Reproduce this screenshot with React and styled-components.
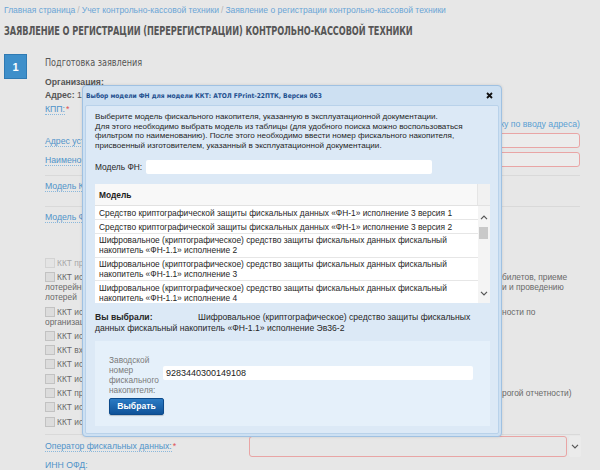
import React from "react";
import styled, { createGlobalStyle } from "styled-components";

const GlobalStyle = createGlobalStyle`
  html, body { margin: 0; padding: 0; }
  body {
    background: #e7e7e7;
    font-family: "Liberation Sans", Arial, sans-serif;
    width: 600px;
    height: 470px;
    overflow: hidden;
  }
`;

const Page = styled.div`
  position: relative;
  width: 600px;
  height: 470px;
  padding-left: 4px;
  box-sizing: border-box;
  background: #e7e7e7;
`;

const Breadcrumbs = styled.nav`
  padding-top: 4px;
  height: 12px;
  line-height: 12px;
  font-size: 8.5px;
  color: #6aa5d6;
  white-space: nowrap;
`;

const Sep = styled.span`
  color: #b5b5b5;
  margin: 0 2px;
`;

const Title = styled.h1`
  margin: 6px 0 0;
  height: 18px;
  line-height: 18px;
  font-family: "DejaVu Sans Condensed", "Liberation Sans Narrow", sans-serif;
  font-weight: bold;
  font-size: 12px;
  color: #565656;
  white-space: nowrap;
  letter-spacing: -0.1px;
  transform: scaleX(0.76);
  transform-origin: left center;
`;

const Step = styled.section`
  display: flex;
  margin-top: 14px;
  gap: 18px;
`;

const Badge = styled.div`
  flex: none;
  width: 23px;
  height: 25px;
  background: #3e8fca;
  border: 1px solid #2f7ab3;
  box-sizing: border-box;
  color: #fff;
  font-weight: bold;
  font-size: 11px;
  display: flex;
  align-items: center;
  justify-content: center;
`;

const StepBody = styled.div`
  width: 535px;
  display: flex;
  flex-direction: column;
`;

const StepTitle = styled.h2`
  margin: 1px 0 0;
  height: 16px;
  line-height: 16px;
  font-family: "DejaVu Sans Condensed", "Liberation Sans Narrow", sans-serif;
  font-weight: normal;
  font-size: 10px;
  color: #555;
  transform: scaleX(0.9);
  transform-origin: left center;
`;

const InfoRow = styled.div`
  height: 13.5px;
  line-height: 13.5px;
  font-size: 8.7px;
  color: #555;
  font-weight: ${(p) => (p.$bold ? "bold" : "normal")};
  white-space: nowrap;
  margin-top: ${(p) => p.$mt || 0}px;
`;

const Link = styled.span`
  color: #4f93c9;
  border-bottom: 1px dotted #8ab8dc;
  line-height: 10px;
`;

const Req = styled.span`
  color: #e05252;
  margin-left: 1px;
`;

const Hint = styled.div`
  margin-top: 2px;
  height: 12px;
  line-height: 12px;
  font-size: 8.7px;
  color: #5a9fd3;
  text-align: right;
  white-space: nowrap;
  overflow: hidden;
`;

const FieldRow = styled.div`
  display: grid;
  grid-template-columns: 202px 1fr;
  align-items: center;
  height: 15px;
  margin-top: ${(p) => p.$mt || 0}px;
  font-size: 8.7px;
  white-space: nowrap;
`;

const RedInput = styled.div`
  height: 15px;
  border: 1px solid #e9a5a5;
  border-radius: 3px;
  box-sizing: border-box;
  background: #ececec;
`;

const Divider = styled.div`
  height: 1px;
  background: #d9d9d9;
  margin-top: ${(p) => p.$mt || 0}px;
`;

const PlainRow = styled.div`
  padding-top: ${(p) => p.$pt || 0}px;
  height: 12px;
  line-height: 12px;
  font-size: 8.7px;
  white-space: nowrap;
`;

const Checks = styled.div`
  margin-top: ${(p) => p.$mt || 0}px;
  display: flex;
  flex-direction: column;
  gap: 4.3px;
`;

const CheckItem = styled.div`
  display: grid;
  grid-template-columns: 457px 78px;
  font-size: 8.4px;
  line-height: 10px;
  color: ${(p) => (p.$disabled ? "#a9a9a9" : "#6a6a6a")};
`;

const CheckStart = styled.span`
  white-space: nowrap;
  overflow: hidden;
  display: flex;
  align-items: center;
`;

const CheckTail = styled.span`
  white-space: nowrap;
  overflow: hidden;
`;

const Box = styled.span`
  flex: none;
  width: 8px;
  height: 8px;
  margin-right: 2px;
  border: 1px solid ${(p) => (p.$disabled ? "#d3d3d3" : "#c2c2c2")};
  background: ${(p) => (p.$disabled ? "#e4e4e4" : "#dcdcdc")};
`;

const SelectRow = styled.div`
  display: grid;
  grid-template-columns: 202px 318px 12px;
  column-gap: 2px;
  align-items: center;
  height: 21px;
  margin-top: 1px;
  font-size: 8.7px;
  white-space: nowrap;
`;

const RedSelect = styled.div`
  height: 21px;
  border: 1px solid #e9a5a5;
  border-radius: 3px;
  box-sizing: border-box;
`;

const ArrowBtn = styled.div`
  height: 21px;
  display: flex;
  align-items: center;
  justify-content: center;
  background: #ebebeb;
  border-radius: 2px;
  color: #666;
`;

/* ---------- modal ---------- */

const Modal = styled.div`
  position: absolute;
  left: 82px;
  top: 85px;
  width: 420px;
  height: 352px;
  box-sizing: border-box;
  border: 1px solid #9fc1e2;
  border-radius: 4px;
  background: #cde0f2;
  box-shadow: 0 0 3px rgba(0, 0, 0, 0.12);
  padding: 0 2px 2px;
  display: flex;
  flex-direction: column;
`;

const TitleBar = styled.div`
  height: 19px;
  flex: none;
  display: flex;
  align-items: center;
  justify-content: space-between;
  padding: 0 6px 0 1px;
`;

const ModalTitle = styled.div`
  font-family: "DejaVu Sans Condensed", "DejaVu Sans", Verdana, sans-serif;
  font-weight: bold;
  font-size: 6.6px;
  color: #1d4f8f;
  white-space: nowrap;
`;

const ModalBody = styled.div`
  flex: 1;
  background: #dce9f6;
  border: 1px solid #b9d2ea;
  border-radius: 2px;
  padding: 6px 8px 0 9px;
  display: flex;
  flex-direction: column;
  font-size: 8.4px;
  color: #262626;
`;

const Intro = styled.p`
  margin: 0;
  font-size: 8.1px;
  line-height: 9.6px;
  white-space: nowrap;
  color: #1f1f1f;
`;

const FilterRow = styled.div`
  display: flex;
  align-items: center;
  margin-top: 10px;
  height: 14px;
  font-size: 8.4px;
`;

const FilterLabel = styled.span`
  width: 51px;
  flex: none;
`;

const FilterInput = styled.div`
  width: 286px;
  height: 14px;
  background: #fff;
  border-radius: 2px;
`;

const Table = styled.div`
  margin-top: 10px;
  width: 395px;
  background: #fff;
  display: flex;
  flex-direction: column;
`;

const HeadRow = styled.div`
  display: grid;
  grid-template-columns: 1fr 12px;
  height: 22px;
  background: #f8f8f8;
  border-bottom: 1px solid #e2e2e2;
  box-sizing: border-box;
`;

const HeadCell = styled.div`
  display: flex;
  align-items: center;
  padding-left: 4px;
  font-weight: bold;
  font-size: 8.4px;
  color: #1d1d1d;
  border-right: ${(p) => (p.$last ? "none" : "1px solid #e5e5e5")};
  background: ${(p) => (p.$last ? "#f1f1f1" : "transparent")};
`;

const BodyArea = styled.div`
  display: grid;
  grid-template-columns: 1fr 12px;
  height: 97px;
  overflow: hidden;
`;

const Rows = styled.div`
  display: flex;
  flex-direction: column;
`;

const Row = styled.div`
  padding: 1.5px 4px 1.25px;
  line-height: 10px;
  border-bottom: 1px solid #e6e6e6;
  white-space: nowrap;
`;

const Scrollbar = styled.div`
  background: #f4f4f4;
  position: relative;
  display: flex;
  flex-direction: column;
  align-items: center;
  justify-content: space-between;
  padding: 9px 0 9px;
`;

const Thumb = styled.div`
  position: absolute;
  top: 21px;
  left: 1px;
  width: 9px;
  height: 12px;
  background: #c9c9c9;
`;

const Chosen = styled.div`
  margin-top: 8.5px;
  line-height: 11px;
  font-size: 8.6px;
`;

const ChosenLabel = styled.span`
  display: inline-block;
  width: 103px;
  font-weight: bold;
`;

const SerialPanel = styled.div`
  margin-top: 7px;
  width: 395px;
  height: 85px;
  box-sizing: border-box;
  background: #e5f0fa;
  padding: 14px 0 0 14px;
`;

const SerialRow = styled.div`
  display: grid;
  grid-template-columns: 54px 310px;
  align-items: start;
`;

const SerialLabel = styled.div`
  color: #7b7b7b;
  line-height: 10.2px;
  font-size: 8.3px;
`;

const SerialInput = styled.div`
  margin-top: 11px;
  height: 14px;
  background: #fff;
  border-radius: 2px;
  padding-left: 3px;
  line-height: 14px;
  font-size: 9px;
  color: #222;
`;

const Button = styled.button`
  margin-top: 2px;
  width: 55px;
  height: 17px;
  padding: 0;
  border: 1px solid #0c4a8b;
  border-radius: 2px;
  background: linear-gradient(#2b7bc4, #0f5299);
  color: #fff;
  font-family: "Liberation Sans", Arial, sans-serif;
  font-weight: bold;
  font-size: 8.6px;
  box-shadow: 0 1px 1px rgba(0, 0, 0, 0.2);
`;

const Chevron = ({ up }) => (
  <svg width="8" height="5" viewBox="0 0 8 5">
    <path
      d={up ? "M1 4.2 L4 1.2 L7 4.2" : "M1 0.8 L4 3.8 L7 0.8"}
      fill="none"
      stroke="#555"
      strokeWidth="1.2"
    />
  </svg>
);

const CloseIcon = () => (
  <svg width="7" height="7" viewBox="0 0 7 7">
    <path d="M1 1 L6 6 M6 1 L1 6" stroke="#111" strokeWidth="1.8" />
  </svg>
);

const checks = [
  { disabled: true, lines: [["ККТ предназначена для работы в автономном режиме", ""]] },
  {
    lines: [
      ["ККТ используется при распространении лотерейных", "билетов, приеме"],
      ["лотерейных ставок и выплате выигрышей при организаци", "и и проведению"],
      ["лотерей", ""],
    ],
  },
  {
    lines: [
      ["ККТ используется при осуществлении деятель", "ности по"],
      ["организации и проведению азартных игр", ""],
    ],
  },
  { lines: [["ККТ используется при приеме ставок", ""]] },
  { lines: [["ККТ входит в состав автоматического устройства для расчетов", ""]] },
  { lines: [["ККТ используется для расчетов в сети Интернет", ""]] },
  { lines: [["ККТ используется при продаже подакцизных товаров", ""]] },
  { lines: [["ККТ предназначена для оказания услуг (бланк ст", "рогой отчетности)"]] },
  { lines: [["ККТ используется только для оказания услуг", ""]] },
  { lines: [["ККТ используется при осуществлении перевозок", ""]] },
];

const models = [
  ["Средство криптографической защиты фискальных данных «ФН-1» исполнение 3 версия 1"],
  ["Средство криптографической защиты фискальных данных «ФН-1» исполнение 3 версия 2"],
  [
    "Шифровальное (криптографическое) средство защиты фискальных данных фискальный",
    "накопитель «ФН-1.1» исполнение 2",
  ],
  [
    "Шифровальное (криптографическое) средство защиты фискальных данных фискальный",
    "накопитель «ФН-1.1» исполнение 3",
  ],
  [
    "Шифровальное (криптографическое) средство защиты фискальных данных фискальный",
    "накопитель «ФН-1.1» исполнение 4",
  ],
];

export default function App() {
  return (
    <Page>
      <GlobalStyle />
      <Breadcrumbs>
        Главная страница<Sep>/</Sep>Учет контрольно-кассовой техники<Sep>/</Sep>Заявление о
        регистрации контрольно-кассовой техники
      </Breadcrumbs>
      <Title>ЗАЯВЛЕНИЕ О РЕГИСТРАЦИИ (ПЕРЕРЕГИСТРАЦИИ) КОНТРОЛЬНО-КАССОВОЙ ТЕХНИКИ</Title>
      <Step>
        <Badge>1</Badge>
        <StepBody>
          <StepTitle>Подготовка заявления</StepTitle>
          <InfoRow $bold $mt={4.5}>Организация:</InfoRow>
          <InfoRow $bold>
            Адрес: <span style={{ fontWeight: "normal" }}>1</span>
          </InfoRow>
          <InfoRow>
            <Link>КПП:</Link>
            <Req>*</Req>
          </InfoRow>
          <Hint>(перейти к справочнику по вводу адреса)</Hint>
          <FieldRow $mt={3}>
            <span>
              <Link>Адрес установки ККТ:</Link>
              <Req>*</Req>
            </span>
            <RedInput />
          </FieldRow>
          <FieldRow $mt={4}>
            <span>
              <Link>Наименование места установки:</Link>
              <Req>*</Req>
            </span>
            <RedInput />
          </FieldRow>
          <Divider $mt={8} />
          <PlainRow $pt={4}>
            <Link>Модель ККТ:</Link>
          </PlainRow>
          <Divider $mt={14} />
          <PlainRow $pt={4}>
            <Link>Модель ФН:</Link>
          </PlainRow>
          <Checks $mt={35}>
            {checks.map((c, i) => (
              <div key={i}>
                {c.lines.map(([start, tail], j) => (
                  <CheckItem key={j} $disabled={c.disabled}>
                    <CheckStart>
                      {j === 0 && <Box $disabled={c.disabled} />}
                      {start}
                    </CheckStart>
                    <CheckTail>{tail}</CheckTail>
                  </CheckItem>
                ))}
              </div>
            ))}
          </Checks>
          <Divider $mt={7} />
          <SelectRow>
            <span>
              <Link>Оператор фискальных данных:</Link>
              <Req>*</Req>
            </span>
            <RedSelect />
            <ArrowBtn>
              <Chevron />
            </ArrowBtn>
          </SelectRow>
          <PlainRow $pt={2}>
            <Link>ИНН ОФД:</Link>
          </PlainRow>
        </StepBody>
      </Step>

      <Modal>
        <TitleBar>
          <ModalTitle>Выбор модели ФН для модели ККТ: АТОЛ FPrint-22ПТК, Версия 063</ModalTitle>
          <CloseIcon />
        </TitleBar>
        <ModalBody>
          <Intro>
            Выберите модель фискального накопителя, указанную в эксплуатационной документации.
            <br />
            Для этого необходимо выбрать модель из таблицы (для удобного поиска можно воспользоваться
            <br />
            фильтром по наименованию). После этого необходимо ввести номер фискального накопителя,
            <br />
            присвоенный изготовителем, указанный в эксплуатационной документации.
          </Intro>
          <FilterRow>
            <FilterLabel>Модель ФН:</FilterLabel>
            <FilterInput />
          </FilterRow>
          <Table>
            <HeadRow>
              <HeadCell>Модель</HeadCell>
              <HeadCell $last />
            </HeadRow>
            <BodyArea>
              <Rows>
                {models.map((m, i) => (
                  <Row key={i}>
                    {m.map((line, j) => (
                      <React.Fragment key={j}>
                        {j > 0 && <br />}
                        {line}
                      </React.Fragment>
                    ))}
                  </Row>
                ))}
              </Rows>
              <Scrollbar>
                <Chevron up />
                <Thumb />
                <Chevron />
              </Scrollbar>
            </BodyArea>
          </Table>
          <Chosen>
            <ChosenLabel>Вы выбрали:</ChosenLabel>
            Шифровальное (криптографическое) средство защиты фискальных
            <br />
            данных фискальный накопитель «ФН-1.1» исполнение Эв36-2
          </Chosen>
          <SerialPanel>
            <SerialRow>
              <SerialLabel>
                Заводской
                <br />
                номер
                <br />
                фискального
                <br />
                накопителя:
              </SerialLabel>
              <SerialInput>9283440300149108</SerialInput>
            </SerialRow>
            <Button>Выбрать</Button>
          </SerialPanel>
        </ModalBody>
      </Modal>
    </Page>
  );
}
